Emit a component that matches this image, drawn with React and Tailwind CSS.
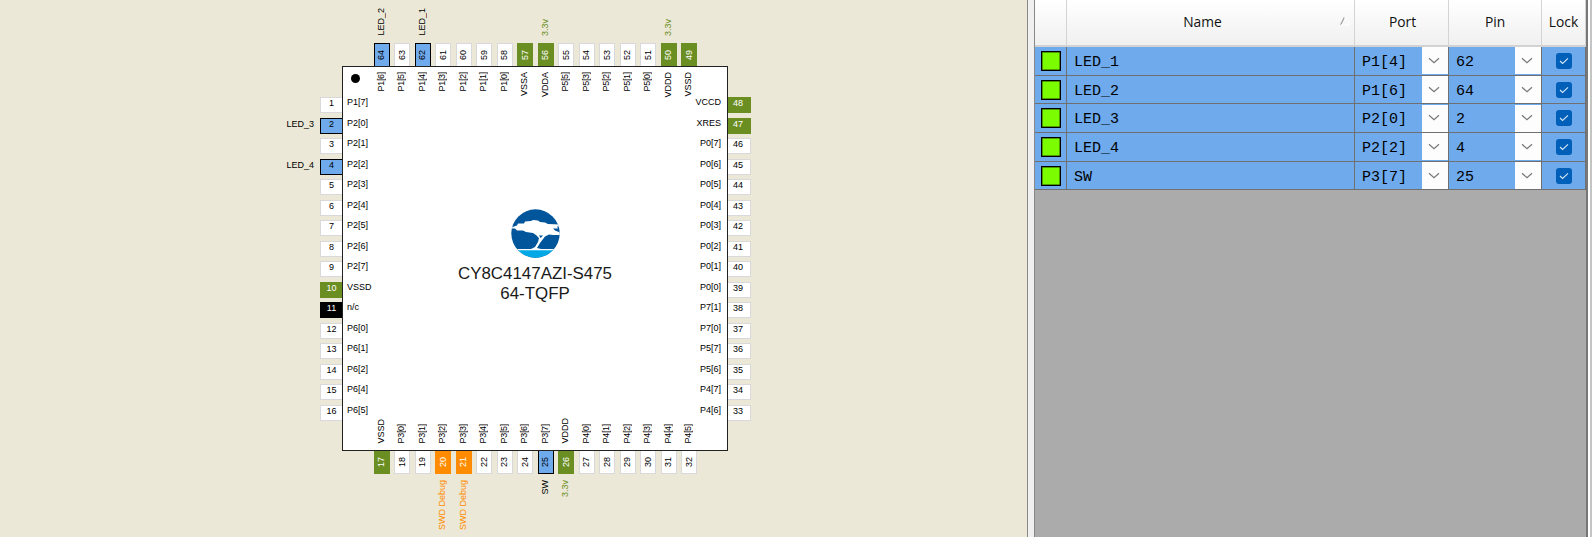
import React from "react";

const LEFT = [
  ["1", "P1[7]"], ["2", "P2[0]", "used", "LED_3"], ["3", "P2[1]"], ["4", "P2[2]", "used", "LED_4"],
  ["5", "P2[3]"], ["6", "P2[4]"], ["7", "P2[5]"], ["8", "P2[6]"], ["9", "P2[7]"],
  ["10", "VSSD", "power"], ["11", "n/c", "nc"], ["12", "P6[0]"], ["13", "P6[1]"],
  ["14", "P6[2]"], ["15", "P6[4]"], ["16", "P6[5]"],
];
const BOTTOM = [
  ["17", "VSSD", "power"], ["18", "P3[0]"], ["19", "P3[1]"], ["20", "P3[2]", "debug", "SWD Debug"],
  ["21", "P3[3]", "debug", "SWD Debug"], ["22", "P3[4]"], ["23", "P3[5]"], ["24", "P3[6]"],
  ["25", "P3[7]", "used", "SW"], ["26", "VDDD", "power", "3.3v"], ["27", "P4[0]"], ["28", "P4[1]"],
  ["29", "P4[2]"], ["30", "P4[3]"], ["31", "P4[4]"], ["32", "P4[5]"],
];
const RIGHT = [
  ["48", "VCCD", "power"], ["47", "XRES", "power"], ["46", "P0[7]"], ["45", "P0[6]"], ["44", "P0[5]"],
  ["43", "P0[4]"], ["42", "P0[3]"], ["41", "P0[2]"], ["40", "P0[1]"], ["39", "P0[0]"],
  ["38", "P7[1]"], ["37", "P7[0]"], ["36", "P5[7]"], ["35", "P5[6]"], ["34", "P4[7]"], ["33", "P4[6]"],
];
const TOP = [
  ["64", "P1[6]", "used", "LED_2"], ["63", "P1[5]"], ["62", "P1[4]", "used", "LED_1"], ["61", "P1[3]"],
  ["60", "P1[2]"], ["59", "P1[1]"], ["58", "P1[0]"], ["57", "VSSA", "power"],
  ["56", "VDDA", "power", "3.3v"], ["55", "P5[5]"], ["54", "P5[3]"], ["53", "P5[2]"],
  ["52", "P5[1]"], ["51", "P5[0]"], ["50", "VDDD", "power", "3.3v"], ["49", "VSSD", "power"],
];
const ROWS = [
  ["LED_1", "P1[4]", "62"], ["LED_2", "P1[6]", "64"], ["LED_3", "P2[0]", "2"],
  ["LED_4", "P2[2]", "4"], ["SW", "P3[7]", "25"],
];

const FILL = {
  free: "bg-white border-[#d9d9dc] text-black",
  used: "bg-[#6eaaec] border-black text-black",
  power: "bg-[#6b8e23] border-[#6b8e23] text-white",
  debug: "bg-[#ff8c00] border-[#ff8c00] text-white",
  nc: "bg-black border-black text-white",
};
const NET = { used: "text-black", power: "text-[#6b8e23]", debug: "text-[#ff8c00]" };
const VERT = "[writing-mode:vertical-rl] rotate-180 whitespace-nowrap leading-[15px]";

function SidePins({ pins, right }) {
  return (
    <div className="flex flex-col pt-[31px]">
      {pins.map(([n, , kind = "free", net]) => (
        <div key={n} className={`flex h-[20.5px] shrink-0 items-start ${right ? "justify-start" : "justify-end"}`}>
          {net && <span className="mr-[6px] leading-[13px]">{net}</span>}
          <div className={`flex h-4 justify-center leading-[10px] ${right ? "w-[23px] border border-l-0 pr-[2px]" : "w-[22px] border border-r-0"} ${FILL[kind]}`}>
            {n}
          </div>
        </div>
      ))}
    </div>
  );
}

function SideNames({ pins, right }) {
  return (
    <div className={`flex flex-col pt-[29px] ${right ? "items-end pr-[6px]" : "pl-1"}`}>
      {pins.map(([n, name]) => (
        <div key={n} className="h-[20.5px] shrink-0 leading-[13px]">{name}</div>
      ))}
    </div>
  );
}

function EdgePins({ pins, bottom }) {
  return (
    <div className={`flex pl-[31.5px] ${bottom ? "items-start" : "items-end"}`}>
      {pins.map(([n, , kind = "free", net]) => (
        <div key={n} className={`flex w-[20.5px] shrink-0 items-start ${bottom ? "flex-col" : "flex-col-reverse"}`}>
          <div className={`flex h-[23px] w-4 items-center justify-center ${bottom ? "border border-t-0" : "border border-b-0"} ${FILL[kind]}`}>
            <span className={VERT}>{n}</span>
          </div>
          {net && <span className={`${VERT} ${bottom ? "mt-[6px]" : "mb-[7px]"} ${NET[kind]}`}>{net}</span>}
        </div>
      ))}
    </div>
  );
}

function EdgeNames({ pins, bottom }) {
  return (
    <div className={`flex pl-[30.5px] ${bottom ? "items-end pb-[6px]" : "items-start pt-[5px]"}`}>
      {pins.map(([n, name]) => (
        <div key={n} className="flex w-[20.5px] shrink-0">
          <span className={`${VERT} ${name[0] === "P" ? "tracking-[-0.3px]" : ""}`}>{name}</span>
        </div>
      ))}
    </div>
  );
}

function Logo() {
  return (
    <svg className="h-[49px] w-[49px]" viewBox="0 0 49 49">
      <defs>
        <clipPath id="disc"><circle cx="24.5" cy="24.5" r="24.2" /></clipPath>
      </defs>
      <g clipPath="url(#disc)">
        <rect width="49" height="49" fill="#00559b" />
        <rect y="41" width="49" height="8" fill="#00a9e6" />
        <path d="M0 18.5L6 16.5L7 14.5L13 14.5L14 12.5L20 12L22 11L27 11.5L29 13L34 13.5L37 15L49 15.5V17.5H46L47 19.5H42L44 21.5L49 23.5V26H42L38 25.5L34 27.5L29 34L26 39L30 40H49V41.2H0V40H20L24 38L27 33L28 29L25 26L22 24L15 23L12 21.5L6 21.5L4 19.5H0Z" fill="#fff" />
        <path d="M28 26.6L32 26.6L29.7 29Z" fill="#00559b" />
      </g>
    </svg>
  );
}

function DropButton() {
  return (
    <div className="flex h-[27px] w-[26px] shrink-0 items-center justify-center bg-[#fdfdfd] pr-[2px]">
      <svg className="h-3 w-3" viewBox="0 0 12 12" fill="none" stroke="#777" strokeWidth="1.2">
        <path d="M1 3.2L6 7.8L11 3.2" />
      </svg>
    </div>
  );
}

const COLS = "grid grid-cols-[32px_288px_94px_93px_44px]";

function PinTable() {
  const head = "flex items-center justify-center border-r border-[#d4d4d4]";
  const cell = "flex items-center border-r border-[#707070]";
  return (
    <div className="flex w-[551px] flex-col bg-[#ababab]">
      <div className={`${COLS} h-[47px] border-b-2 border-[#d2d2d2] bg-linear-to-b from-white to-[#f0f0f0] font-['Open_Sans'] text-[13.8px] text-[#111]`}>
        <div className={head} />
        <div className={`${head} relative pr-4`}>
          Name
          <svg className="absolute top-[16px] right-[3px] h-[10px] w-[12px]" viewBox="0 0 12 10">
            <path d="M1.5 9L5.5 1" stroke="#999" strokeWidth="1.1" />
            <path d="M5.5 1L10.5 9H1.5" stroke="#fff" fill="none" />
          </svg>
        </div>
        <div className={`${head} pl-[2px]`}>Port</div>
        <div className={head}>Pin</div>
        <div className={head}>Lock</div>
      </div>
      {ROWS.map(([name, port, pin]) => (
        <div key={name} className={`${COLS} h-[28.7px] border-b border-[#707070] bg-[#6eaaec] font-['Liberation_Mono'] text-[15px] text-black`}>
          <div className={`${cell} justify-center`}>
            <div className="h-5 w-5 border border-black bg-[#7cfc00] shadow-[inset_0_0_0_0.5px_#1c3a00]" />
          </div>
          <div className={`${cell} pt-[5px] pl-[7px]`}>{name}</div>
          <div className={`${cell} justify-between pl-[7px]`}>
            <span className="pt-[5px]">{port}</span>
            <DropButton />
          </div>
          <div className={`${cell} justify-between pl-[7px]`}>
            <span className="pt-[5px]">{pin}</span>
            <DropButton />
          </div>
          <div className={`${cell} justify-center`}>
            <div className="flex h-4 w-4 items-center justify-center rounded-[3px] bg-[#005fb8]">
              <svg className="h-[10px] w-[10px]" viewBox="0 0 10 10" fill="none" stroke="#d8e8f8" strokeWidth="1.1">
                <path d="M1 5L3.6 7.5L9 2.4" />
              </svg>
            </div>
          </div>
        </div>
      ))}
    </div>
  );
}

export default function App() {
  return (
    <div className="flex h-[537px] w-[1592px] overflow-hidden bg-[#f0f0f0]">
      <div className="grid w-[1027px] shrink-0 grid-cols-[342px_386px_299px] grid-rows-[66px_385px_86px] bg-[#ebe8d7] font-['Liberation_Sans'] text-[9px] text-black">
        <div />
        <EdgePins pins={TOP} />
        <div />
        <SidePins pins={LEFT} />
        <div className="relative grid grid-cols-[30px_1fr_30px] grid-rows-1 border border-[#222] bg-white">
          <div className="absolute top-[7px] left-[8px] h-[9px] w-[9px] rounded-full bg-black" />
          <SideNames pins={LEFT} />
          <div className="-mx-[30px] flex flex-col justify-between">
            <EdgeNames pins={TOP} />
            <div className="flex flex-col items-center pb-[3px] text-[16.9px] leading-5 text-[#1a1a1a]">
              <Logo />
              <div className="mt-[6px]">CY8C4147AZI-S475</div>
              <div>64-TQFP</div>
            </div>
            <EdgeNames pins={BOTTOM} bottom />
          </div>
          <SideNames pins={RIGHT} right />
        </div>
        <SidePins pins={RIGHT} right />
        <div />
        <EdgePins pins={BOTTOM} bottom />
        <div />
      </div>
      <div className="w-2 shrink-0 border-x border-[#888] bg-[#f0f0f0]" />
      <PinTable />
      <div className="flex w-[6px] shrink-0 border-l-2 border-[#777] bg-white">
        <div className="ml-auto w-[2px] bg-[#c4c4c4]" />
      </div>
    </div>
  );
}
